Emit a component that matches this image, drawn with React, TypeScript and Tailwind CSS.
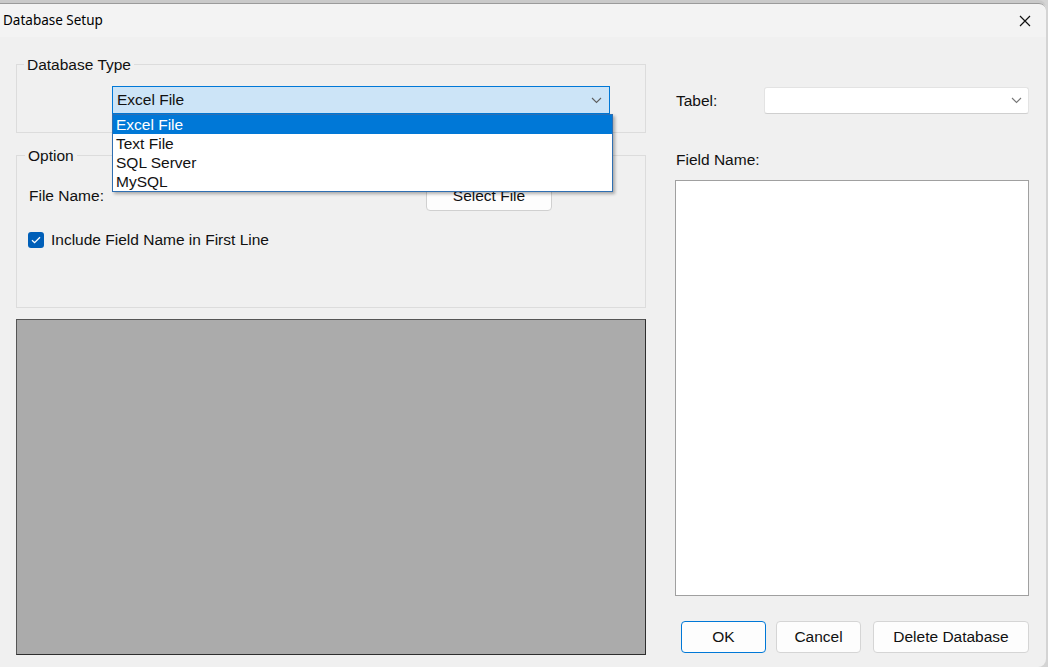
import React from 'react';

const options = ['Excel File', 'Text File', 'SQL Server', 'MySQL'];

function Chevron({ className }: { className?: string }) {
  return (
    <svg className={className} width="11" height="7" viewBox="0 0 11 7" fill="none">
      <path d="M1 1l4.5 4.5L10 1" stroke="currentColor" strokeWidth="1.1" />
    </svg>
  );
}

export default function App() {
  return (
    <div className="w-[1048px] h-[667px] bg-[#d4d4d4] overflow-hidden" style={{ fontFamily: '"Liberation Sans", Arial, sans-serif' }}>
      <div className="w-[1046px] h-[667px] flex flex-col bg-[#f0f0f0] rounded-tr-[8px] rounded-br-[8px] border-t-[3px] border-[#c9c9c9] text-[15.5px] text-[#111]">
        {/* title bar */}
        <div className="h-[34px] flex items-center justify-between bg-[#f3f3f3] border-t border-[#9a9a9a] rounded-tr-[7px]">
          <span className="pl-[3px] text-[13.5px] text-black" style={{ fontFamily: '"Noto Sans", "Liberation Sans", sans-serif' }}>Database Setup</span>
          <button className="w-[40px] h-[30px] flex items-center justify-center mr-[1px]">
            <svg width="12" height="12" viewBox="0 0 12 12">
              <path d="M1 1l10 10M11 1L1 11" stroke="#111" strokeWidth="1.2" />
            </svg>
          </button>
        </div>

        {/* body */}
        <div className="flex-1 flex pl-[16px] gap-[29px]">
          {/* left column */}
          <div className="w-[630px] flex flex-col pt-[19px] pb-[12px]">
            <fieldset className="relative border border-[#dcdcdc] pb-[18px]">
              <legend className="ml-[7px] px-[3px] leading-[17px]">Database Type</legend>
              <div className="relative ml-[95px] mt-[13px] w-[498px]">
                <div className="h-[28px] flex items-center justify-between pl-[4px] pr-[7px] bg-[#cce4f7] border border-[#0078d7]">
                  <span>Excel File</span>
                  <Chevron className="text-[#5f5f5f]" />
                </div>
                <ul className="absolute left-0 top-[28px] z-10 w-[501px] bg-white border border-[#2f6fb2] shadow-[2px_2px_3px_rgba(0,0,0,0.3)]">
                  {options.map((o, i) => (
                    <li
                      key={o}
                      className={
                        i === 0
                          ? 'h-[19px] leading-[19px] pl-[3px] bg-[#0078d7] text-white'
                          : 'h-[19px] leading-[19px] pl-[3px]'
                      }
                    >
                      {o}
                    </li>
                  ))}
                </ul>
              </div>
            </fieldset>

            <fieldset className="mt-[14px] h-[161px] border border-[#dcdcdc]">
              <legend className="ml-[8px] px-[3px] leading-[17px]">Option</legend>
              <div className="flex items-center mt-[16px] pl-[12px]">
                <span className="w-[397px]">File Name:</span>
                <button className="w-[126px] h-[31px] bg-[#fdfdfd] border border-[#d0d0d0] rounded-[4px]">Select File</button>
              </div>
              <label className="flex items-center gap-[7px] mt-[17px] pl-[11px]">
                <span className="w-[16px] h-[16px] rounded-[3px] bg-[#005fb8] flex items-center justify-center">
                  <svg width="10" height="8" viewBox="0 0 10 8" fill="none">
                    <path d="M1 4.2l2.6 2.5L9 1.2" stroke="white" strokeWidth="1.3" />
                  </svg>
                </span>
                <span>Include Field Name in First Line</span>
              </label>
            </fieldset>

            <div className="mt-[11px] flex-1 bg-[#ababab] border border-[#2e2e2e] border-t-[#555] border-l-[#555]" />
          </div>

          {/* right column */}
          <div className="w-[354px] flex flex-col pt-[50px] pb-[14px]">
            <div className="flex items-center">
              <span className="w-[89px] pl-[1px]">Tabel:</span>
              <div className="w-[265px] h-[27px] flex items-center justify-end pr-[6px] bg-white border border-[#e3e3e3] border-b-[#cfcfcf] rounded-[3px]">
                <Chevron className="text-[#777]" />
              </div>
            </div>
            <span className="mt-[37px] pl-[1px] leading-[17px]">Field Name:</span>
            <div className="mt-[12px] flex-1 bg-white border border-[#a0a0a0]" />
            <div className="mt-[25px] flex justify-end gap-[10px]">
              <button className="w-[85px] h-[32px] bg-[#fdfdfd] border border-[#0078d7] rounded-[4px]">OK</button>
              <button className="w-[85px] h-[32px] bg-[#fdfdfd] border border-[#d5d5d5] rounded-[4px]">Cancel</button>
              <button className="ml-[2px] w-[156px] h-[32px] bg-[#fdfdfd] border border-[#d5d5d5] rounded-[4px]">Delete Database</button>
            </div>
          </div>
        </div>
      </div>
    </div>
  );
}
